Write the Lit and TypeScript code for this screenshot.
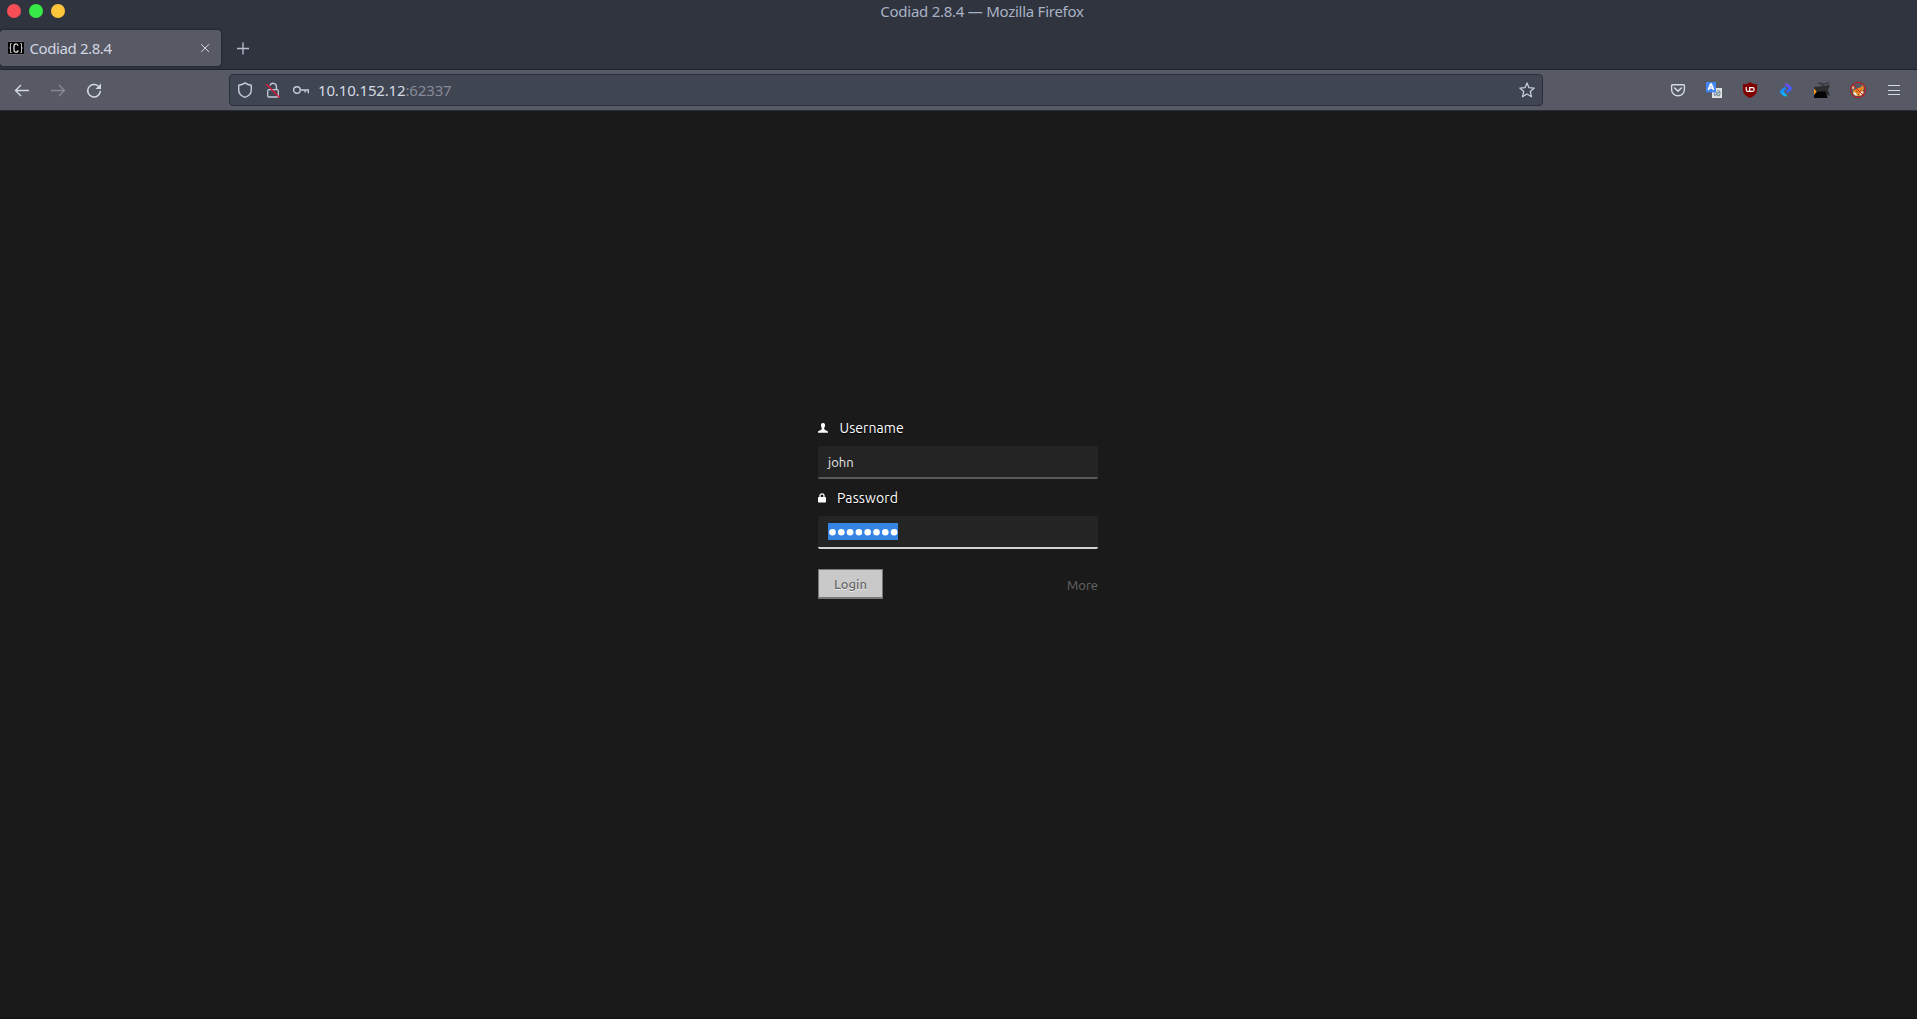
import { LitElement, html, css, svg } from "lit";
import { customElement } from "lit/decorators.js";

const icon = (body: unknown, size = 16) =>
  html`<svg width=${size} height=${size} viewBox="0 0 16 16" fill="none">${body}</svg>`;

const back = svg`<path d="M15 8.5H1.6M7 3L1.5 8.5 7 14" stroke="currentColor" stroke-width="1.4"/>`;
const forward = svg`<path d="M1 8.5H14.4M9 3L14.5 8.5 9 14" stroke="currentColor" stroke-width="1.4"/>`;
const reload = svg`<path d="M14.3 8.7A6.3 6.3 0 1 1 12.2 4" stroke="currentColor" stroke-width="1.5"/><path d="M15 1.5V7H9.5Z" fill="currentColor"/>`;
const shield = svg`<path d="M8 .9C10 2.3 12 3 14.3 3.2V7.8C14.3 11.8 11.5 14.2 8 15.3C4.5 14.2 1.7 11.8 1.7 7.8V3.2C4 3 6 2.3 8 .9Z" stroke="currentColor" stroke-width="1.4" stroke-linejoin="round"/>`;
const lock = svg`<path d="M2.7 9V14Q2.7 15 3.7 15H12.300Q13.300 15 13.300 14V9Q13.300 7.700 12 7.700H4Q2.700 7.700 2.700 9Z" stroke="currentColor" stroke-width="1.3"/><path d="M5 3.500a3.300 3.300 0 0 1 6.400 1V7.700" stroke="currentColor" stroke-width="1.4"/><path d="M1.200 2L14.500 15.500" stroke="#f0123a" stroke-width="1.2"/>`;
const key = svg`<circle cx="3.9" cy="8" r="3.3" stroke="currentColor" stroke-width="1.4"/><path d="M7.2 8H15.3V11.2M12.2 8v2.4" stroke="currentColor" stroke-width="1.4"/>`;
const star = svg`<path d="M8 1L10 5.7 15.2 6.1 11.3 9.5 12.5 14.8 8 12 3.5 14.8 4.7 9.5 .8 6.1 6 5.7Z" stroke="currentColor" stroke-width="1.3" stroke-linejoin="round"/>`;
const pocket = svg`<path d="M2.7 2.7H13.3Q14.4 2.7 14.4 3.8V7.4A6.4 6.4 0 0 1 1.6 7.4V3.8Q1.6 2.7 2.7 2.7Z" stroke="currentColor" stroke-width="1.4"/><path d="M4.6 6L8 9.2 11.4 6" stroke="currentColor" stroke-width="1.6" stroke-linecap="round" stroke-linejoin="round"/>`;
const translate = svg`<rect x="6" y="6" width="10" height="10" fill="#dfe3e4"/><path d="M8 10.500q1.500-1.500 2.500 0t-1.500 3q-1.700-1 0-2M11 9q3-1 3 2t-2 3l-1-2 2-2" stroke="#78909c" stroke-width="1.1"/><path d="M0 0H10V10.300H0Z" fill="#4285f4"/><path d="M2.300 8L4.700 2H5.300L7.700 8M3.400 6H6.600" stroke="#fff" stroke-width="1.700"/>`;
const ublock = svg`<path d="M8 .2C10 1.5 12 2.200 15 2.300V8C15 12 12 14 8 16C4 14 1 12 1 8V2.300C4 2.200 6 1.500 8 .2Z" fill="#800000"/><path d="M4.200 5V7.700Q4.200 9.300 5.600 9.300H7.700V5" stroke="#fff" stroke-width="1.200"/><path d="M7.700 5.600H10.500Q12.200 5.600 12.200 7.400T10.500 9.300H7.700" stroke="#fff" stroke-width="1.200"/>`;
const arrows = svg`<defs><linearGradient id="lo" x1="5" y1="5" x2="8" y2="14" gradientUnits="userSpaceOnUse"><stop stop-color="#2277ff"/><stop offset="1" stop-color="#00c8ff"/></linearGradient><linearGradient id="hi" x1="7" y1="2" x2="10" y2="11" gradientUnits="userSpaceOnUse"><stop stop-color="#7048ff"/><stop offset="1" stop-color="#2f6bff"/></linearGradient></defs><path d="M6 1.700H9.500Q14.300 4.700 14 6.500T9 11.500L8 9 10.500 6.500Z" fill="url(#hi)"/><path d="M7.200 4.500L8 7 5.500 9.500 9.500 14.300H6.500Q2 11.500 2 9.700T7.200 4.500Z" fill="url(#lo)"/>`;
const router = svg`<path d="M3.500 1.500C6 .5 8 2.600 11 2C13 1.500 14 .3 15.500 1.200M6 .8C8 2 8 4 10 4" stroke="#34363c" stroke-width="1.100"/><path d="M0 5L10 4 16 2.700 14 8 16 13.500 13 13 13.500 16H0Z" fill="#2d2d2f"/><path d="M3.500 9.500H11.500L13.500 16H0V13Z" fill="#050505"/><path d="M0 6.500L2.600 9.500 0 13Z" fill="#ff9416"/>`;
const fox = svg`<path d="M3 8.500L5.500 7.500 8 6 10.500 5.500 13 2.700 13.800 6 13 9 14 11 10.500 14 6.500 14 3 12Z" fill="#ec8a24"/><path d="M2 4.500L4.500 4 4 7 2.500 7.500Z" fill="#f0b483"/><path d="M3 10.500L5.500 10.500 7.500 13.500 5 13.500ZM11 9.500L13.500 10 11.500 13 9.500 13Z" fill="#eee"/><path d="M6 9L7.500 10M11.500 8L10.200 9M8 12.500H9.300" stroke="#5a3d22" stroke-width=".9"/><circle cx="8" cy="8" r="7.500" stroke="#c80f13" stroke-width="1"/><path d="M2.700 2.700L13.300 13.300" stroke="#c80f13" stroke-width="1"/>`;
const menu = svg`<path d="M2 3.500H14M2 8.500H14M2 12.500H14" stroke="currentColor" stroke-width="1.2"/>`;
const favicon = svg`<rect y="1.500" width="16" height="13" fill="#050505"/><path d="M0 1.500H16M0 14.500H16" stroke="#77777d" stroke-width=".8"/><path d="M3.700 3.500H2.500V12.500H3.700M12.300 3.500H13.500V12.500H12.300M1.200 8H2.500M13.500 8H14.800" stroke="#bdbdbd" stroke-width="1"/><path d="M10 5.800Q9.800 3.800 8 3.800T6 6V10Q6 12.200 8 12.200T10 10.200" stroke="#e4e4e4" stroke-width="1.2"/>`;
const close = svg`<path d="M4.200 4.200L12 12M12 4.200L4.200 12" stroke="currentColor" stroke-width="1"/>`;
const plus = svg`<path d="M2 8.500H14M8 2.500V14.500" stroke="currentColor" stroke-width="1.300"/>`;

@customElement("browser-chrome")
export class BrowserChrome extends LitElement {
  static styles = css`
    :host { display: block; font-family: "Noto Sans", sans-serif; color: #d3dae3; }
    svg { display: block; flex: none; overflow: visible; }
    .titlebar { height: 24px; display: grid; grid-template-columns: 65px 1fr; align-items: center; background: #2f343f; }
    .lights { display: flex; gap: 8px; padding-left: 7px; margin-top: -2px; }
    .light { width: 14px; height: 14px; border-radius: 50%; }
    .red { background: #f54e57; }
    .green { background: #37ec49; }
    .amber { background: #fdc63a; }
    .title { text-align: center; font-size: 15px; line-height: 22px; letter-spacing: -0.26px; color: #a9b2c4; padding: 0 18px 2px 0; white-space: nowrap; }
    .tabs { height: 45px; display: flex; align-items: flex-start; padding-top: 6px; box-sizing: border-box; background: #2f343f; }
    .tab { width: 221px; height: 36px; box-sizing: border-box; padding: 0 8px; border-radius: 4px; background: #575965; display: flex; align-items: center; box-shadow: 0 0 3px #1d202b; }
    .label { flex: 1; margin-left: 5.5px; font-size: 15px; letter-spacing: -0.4px; color: #d0d5e2; white-space: nowrap; }
    .new { margin: 10px 0 0 14px; color: #b9c0cf; }
    .toolbar { height: 42px; box-sizing: border-box; border-top: 1px solid #20232d; border-bottom: 1px solid #292c39; background: #575965; display: flex; align-items: center; padding: 0 5px 0 4px; }
    .cell { width: 36px; display: flex; justify-content: center; }
    .dim { color: #868995; }
    .url { width: 1314px; height: 32px; box-sizing: border-box; margin-left: 117px; border: 1px solid #2a2e3b; border-radius: 4px; background: #404552; display: flex; align-items: center; padding-left: 1px; color: #c5ccda; }
    .mini { width: 28px; display: flex; justify-content: center; }
    .address { flex: 1; padding-left: 3px; font-size: 15px; letter-spacing: -0.15px; color: #d3dae3; white-space: nowrap; }
    .port { color: #868b98; }
    .bookmark { margin-right: 7px; }
    .tools { margin-left: auto; display: flex; }
  `;
  render() {
    return html`
      <div class="titlebar">
        <div class="lights"><span class="light red"></span><span class="light green"></span><span class="light amber"></span></div>
        <div class="title">Codiad 2.8.4 — Mozilla Firefox</div>
      </div>
      <div class="tabs">
        <div class="tab">${icon(favicon)}<span class="label">Codiad 2.8.4</span>${icon(close)}</div>
        <div class="new">${icon(plus)}</div>
      </div>
      <div class="toolbar">
        <div class="cell">${icon(back)}</div>
        <div class="cell dim">${icon(forward)}</div>
        <div class="cell">${icon(reload)}</div>
        <div class="url">
          <div class="mini">${icon(shield)}</div>
          <div class="mini">${icon(lock)}</div>
          <div class="mini">${icon(key)}</div>
          <div class="address">10.10.152.12<span class="port">:62337</span></div>
          <div class="bookmark">${icon(star)}</div>
        </div>
        <div class="tools">
          ${[pocket, translate, ublock, arrows, router, fox, menu].map((i) => html`<div class="cell">${icon(i)}</div>`)}
        </div>
      </div>
    `;
  }
}

@customElement("login-form")
export class LoginForm extends LitElement {
  static styles = css`
    :host { display: block; width: 280px; font-family: Ubuntu, "Noto Sans", sans-serif; font-size: 13px; color: #fff; }
    svg { display: block; flex: none; }
    .label { display: flex; align-items: center; height: 20px; font-size: 14px; line-height: 20px; text-shadow: 0 1px 1px #000; }
    .user { gap: 11.5px; letter-spacing: 0.08px; }
    .pass { gap: 11px; letter-spacing: 0.1px; margin-top: 9px; }
    .field { height: 33px; box-sizing: border-box; margin-top: 8px; padding: 0 10px; display: flex; align-items: center; background: #242424; border-bottom: 2px solid #5a5a5a; border-radius: 2px; color: #e6e6e6; }
    .focused { border-bottom-color: #d2d2d2; }
    .selection { height: 17px; width: 70px; background: #3584e4; box-sizing: border-box; }
    .selection svg { width: 70px; height: 17px; }
    .actions { display: flex; align-items: center; justify-content: space-between; margin-top: 20px; }
    .login { width: 65px; height: 30px; box-sizing: border-box; border: 1px solid #777; border-bottom-width: 2px; background: #c9c9c9; color: #666; text-align: center; font: 500 13px/27px Ubuntu, "Noto Sans", sans-serif; text-shadow: 0 1px 0 #eee; padding: 1px 0 0; }
    .more { color: #666; padding-top: 1px; }
  `;
  render() {
    return html`
      <div class="label user">
        <svg width="10" height="10" viewBox="0 0 10 10"><path d="M5 0C6.700 0 7.200 1.300 7 2.800C6.900 4 6.200 4.600 6.200 5.500C6.200 7.500 10 7.400 10 9V9.800H0V9C0 7.400 3.800 7.500 3.800 5.500C3.800 4.600 3.100 4 3 2.800C2.800 1.300 3.300 0 5 0Z" fill="#fff"/></svg>
        <span>Username</span>
      </div>
      <div class="field"><span>john</span></div>
      <div class="label pass">
        <svg width="8" height="10" viewBox="0 0 8 10"><path d="M2 4.500V2.800a2 2 0 0 1 4 0V4.500" fill="none" stroke="#fff" stroke-width="1.300"/><rect y="4" width="8" height="5.600" rx=".8" fill="#fff"/></svg>
        <span>Password</span>
      </div>
      <div class="field focused">
        <div class="selection">
          <svg viewBox="0 0 70 17">${Array.from({ length: 8 }, (_, i) => svg`<circle cx=${4.5 + i * 8.8} cy="9.3" r="3.300" fill="#fff"/>`)}</svg>
        </div>
      </div>
      <div class="actions"><button class="login">Login</button><span class="more">More</span></div>
    `;
  }
}

@customElement("app-root")
export class AppRoot extends LitElement {
  static styles = css`
    :host { display: flex; flex-direction: column; width: 100%; height: 100vh; overflow: hidden; background: #1a1a1a; }
    .page { flex: 1; box-sizing: border-box; display: flex; justify-content: center; padding-top: 307px; border-bottom: 1px solid #121212; }
    .form { margin-right: 1px; }
  `;
  render() {
    return html`<browser-chrome></browser-chrome><main class="page"><login-form class="form"></login-form></main>`;
  }
}
